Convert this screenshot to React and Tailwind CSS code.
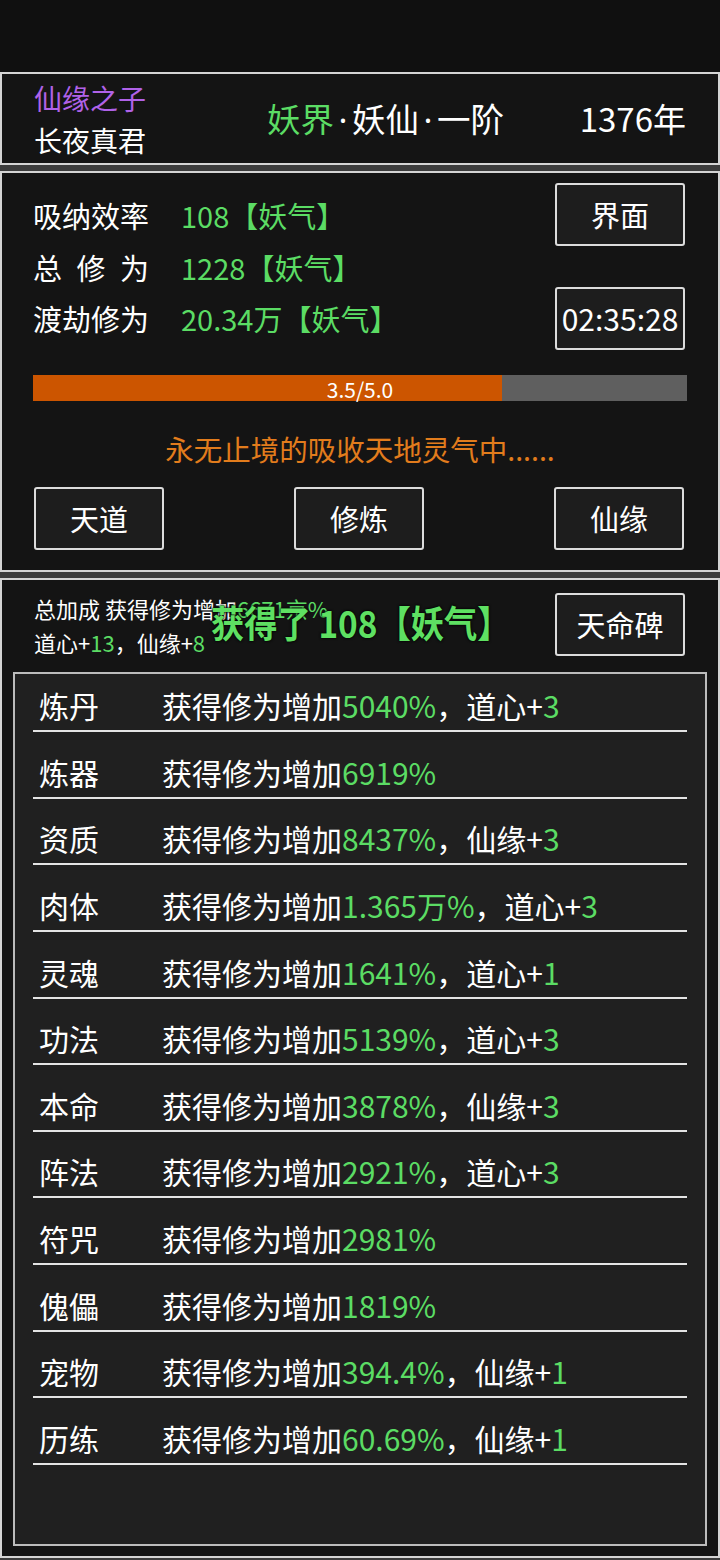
import React from "react";

const GREEN = "text-[#5bdc64]";

const BONUSES = [
  { name: "炼丹", value: "5040%", extra: "道心", add: "3" },
  { name: "炼器", value: "6919%" },
  { name: "资质", value: "8437%", extra: "仙缘", add: "3" },
  { name: "肉体", value: "1.365万%", extra: "道心", add: "3" },
  { name: "灵魂", value: "1641%", extra: "道心", add: "1" },
  { name: "功法", value: "5139%", extra: "道心", add: "3" },
  { name: "本命", value: "3878%", extra: "仙缘", add: "3" },
  { name: "阵法", value: "2921%", extra: "道心", add: "3" },
  { name: "符咒", value: "2981%" },
  { name: "傀儡", value: "1819%" },
  { name: "宠物", value: "394.4%", extra: "仙缘", add: "1" },
  { name: "历练", value: "60.69%", extra: "仙缘", add: "1" },
];

function BoxButton({ children, className = "" }) {
  return (
    <button
      className={`w-[130px] h-[63px] rounded-[3px] border-2 border-[#dcdcdc] bg-[#1d1d1d] text-white text-[29px] flex items-center justify-center ${className}`}
    >
      {children}
    </button>
  );
}

function Dot() {
  return (
    <span className="inline-block w-[18px] text-center font-['Noto_Sans',sans-serif]">·</span>
  );
}

function HeaderPanel() {
  return (
    <div className="h-[93px] border-2 border-[#d4d4d4] bg-[#141414] flex items-center">
      <div className="w-[232px] pl-[32px] flex flex-col text-[28px] leading-[42px]">
        <span className="text-[#b062e8]">仙缘之子</span>
        <span className="text-white">长夜真君</span>
      </div>
      <div className="ml-[33px] text-[33.5px] text-white">
        <span className={GREEN}>妖界</span>
        <Dot />
        妖仙
        <Dot />
        一阶
      </div>
      <div className="ml-auto pr-[32px] text-[33px] text-white">1376年</div>
    </div>
  );
}

function StatLabel({ children }) {
  return <div className="w-[148px] shrink-0">{children}</div>;
}

function CultivationPanel() {
  return (
    <div className="h-[401px] border-2 border-[#d4d4d4] bg-[#141414] px-[31px] flex flex-col">
      <div className="h-[177px] flex justify-between">
        <div className="pt-[17px] text-[29px] leading-[51.5px] text-white">
          <div className="flex">
            <StatLabel>吸纳效率</StatLabel>
            <span className={GREEN}>108【妖气】</span>
          </div>
          <div className="flex">
            <StatLabel>
              <div className="w-[116px] flex justify-between">
                <span>总</span>
                <span>修</span>
                <span>为</span>
              </div>
            </StatLabel>
            <span className={GREEN}>1228【妖气】</span>
          </div>
          <div className="flex">
            <StatLabel>渡劫修为</StatLabel>
            <span className={GREEN}>20.34万【妖气】</span>
          </div>
        </div>
        <div className="pt-[10px] pr-[2px] flex flex-col gap-[41px]">
          <BoxButton>界面</BoxButton>
          <BoxButton className="text-[30px]">02:35:28</BoxButton>
        </div>
      </div>

      <div className="mt-[25px] h-[26px] bg-[#5f5f5f] relative flex">
        <div className="h-full w-[71.7%] bg-[#cc5500]" />
        <div className="absolute inset-0 flex items-center justify-center pt-[2px] text-[21px] text-white leading-none">
          3.5/5.0
        </div>
      </div>

      <div className="mt-[28px] text-center text-[28.5px] leading-[40px] text-[#e27c1c]">
        永无止境的吸收天地灵气中......
      </div>

      <div className="mt-[18px] flex justify-between pl-[1px] pr-[3px]">
        <BoxButton>天道</BoxButton>
        <BoxButton>修炼</BoxButton>
        <BoxButton>仙缘</BoxButton>
      </div>
    </div>
  );
}

function BonusRow({ item, first }) {
  return (
    <div
      className={`${first ? "h-[58px]" : "h-[66.64px]"} border-b-2 border-[#e4e4e4] flex items-end pb-[5px] pl-[6px] text-[30px] leading-[40px] text-white`}
    >
      <div className="w-[123px] shrink-0">{item.name}</div>
      <div>
        获得修为增加<span className={GREEN}>{item.value}</span>
        {item.extra && (
          <>
            ，{item.extra}+<span className={GREEN}>{item.add}</span>
          </>
        )}
      </div>
    </div>
  );
}

function BonusPanel() {
  return (
    <div className="h-[980px] border-2 border-[#d4d4d4] bg-[#141414] flex flex-col relative">
      <div className="h-[92px] flex justify-between pl-[32px] pr-[33px]">
        <div className="pt-[11px] text-[22px] leading-[34px] text-white">
          <div>
            总加成 获得修为增加<span className={GREEN}>6671京%</span>
          </div>
          <div>
            道心+<span className={GREEN}>13</span>，仙缘+<span className={GREEN}>8</span>
          </div>
        </div>
        <div className="pt-[13px]">
          <BoxButton>天命碑</BoxButton>
        </div>
      </div>

      <div className="flex-1 mx-[11px] mb-[10px] border-2 border-[#bcbcbc] bg-[#202020] px-[18px]">
        {BONUSES.map((item, i) => (
          <BonusRow key={item.name} item={item} first={i === 0} />
        ))}
      </div>

      {/* floating gain toast */}
      <div className="absolute left-[209px] top-[18px] text-[37px] font-semibold leading-[48px] text-[#5ee062] origin-left scale-x-[0.9] [text-shadow:0_0_3px_#000,0_0_2px_#000]">
        获得了 108【妖气】
      </div>
    </div>
  );
}

export default function App() {
  return (
    <div className="w-[720px] h-[1560px] bg-[#3c3c3c] flex flex-col font-['Noto_Sans_CJK_SC','Noto_Sans',sans-serif]">
      <div className="h-[72px] bg-[#101010] shrink-0" />
      <HeaderPanel />
      <div className="h-[6px] shrink-0" />
      <CultivationPanel />
      <div className="h-[6px] shrink-0" />
      <BonusPanel />
    </div>
  );
}
